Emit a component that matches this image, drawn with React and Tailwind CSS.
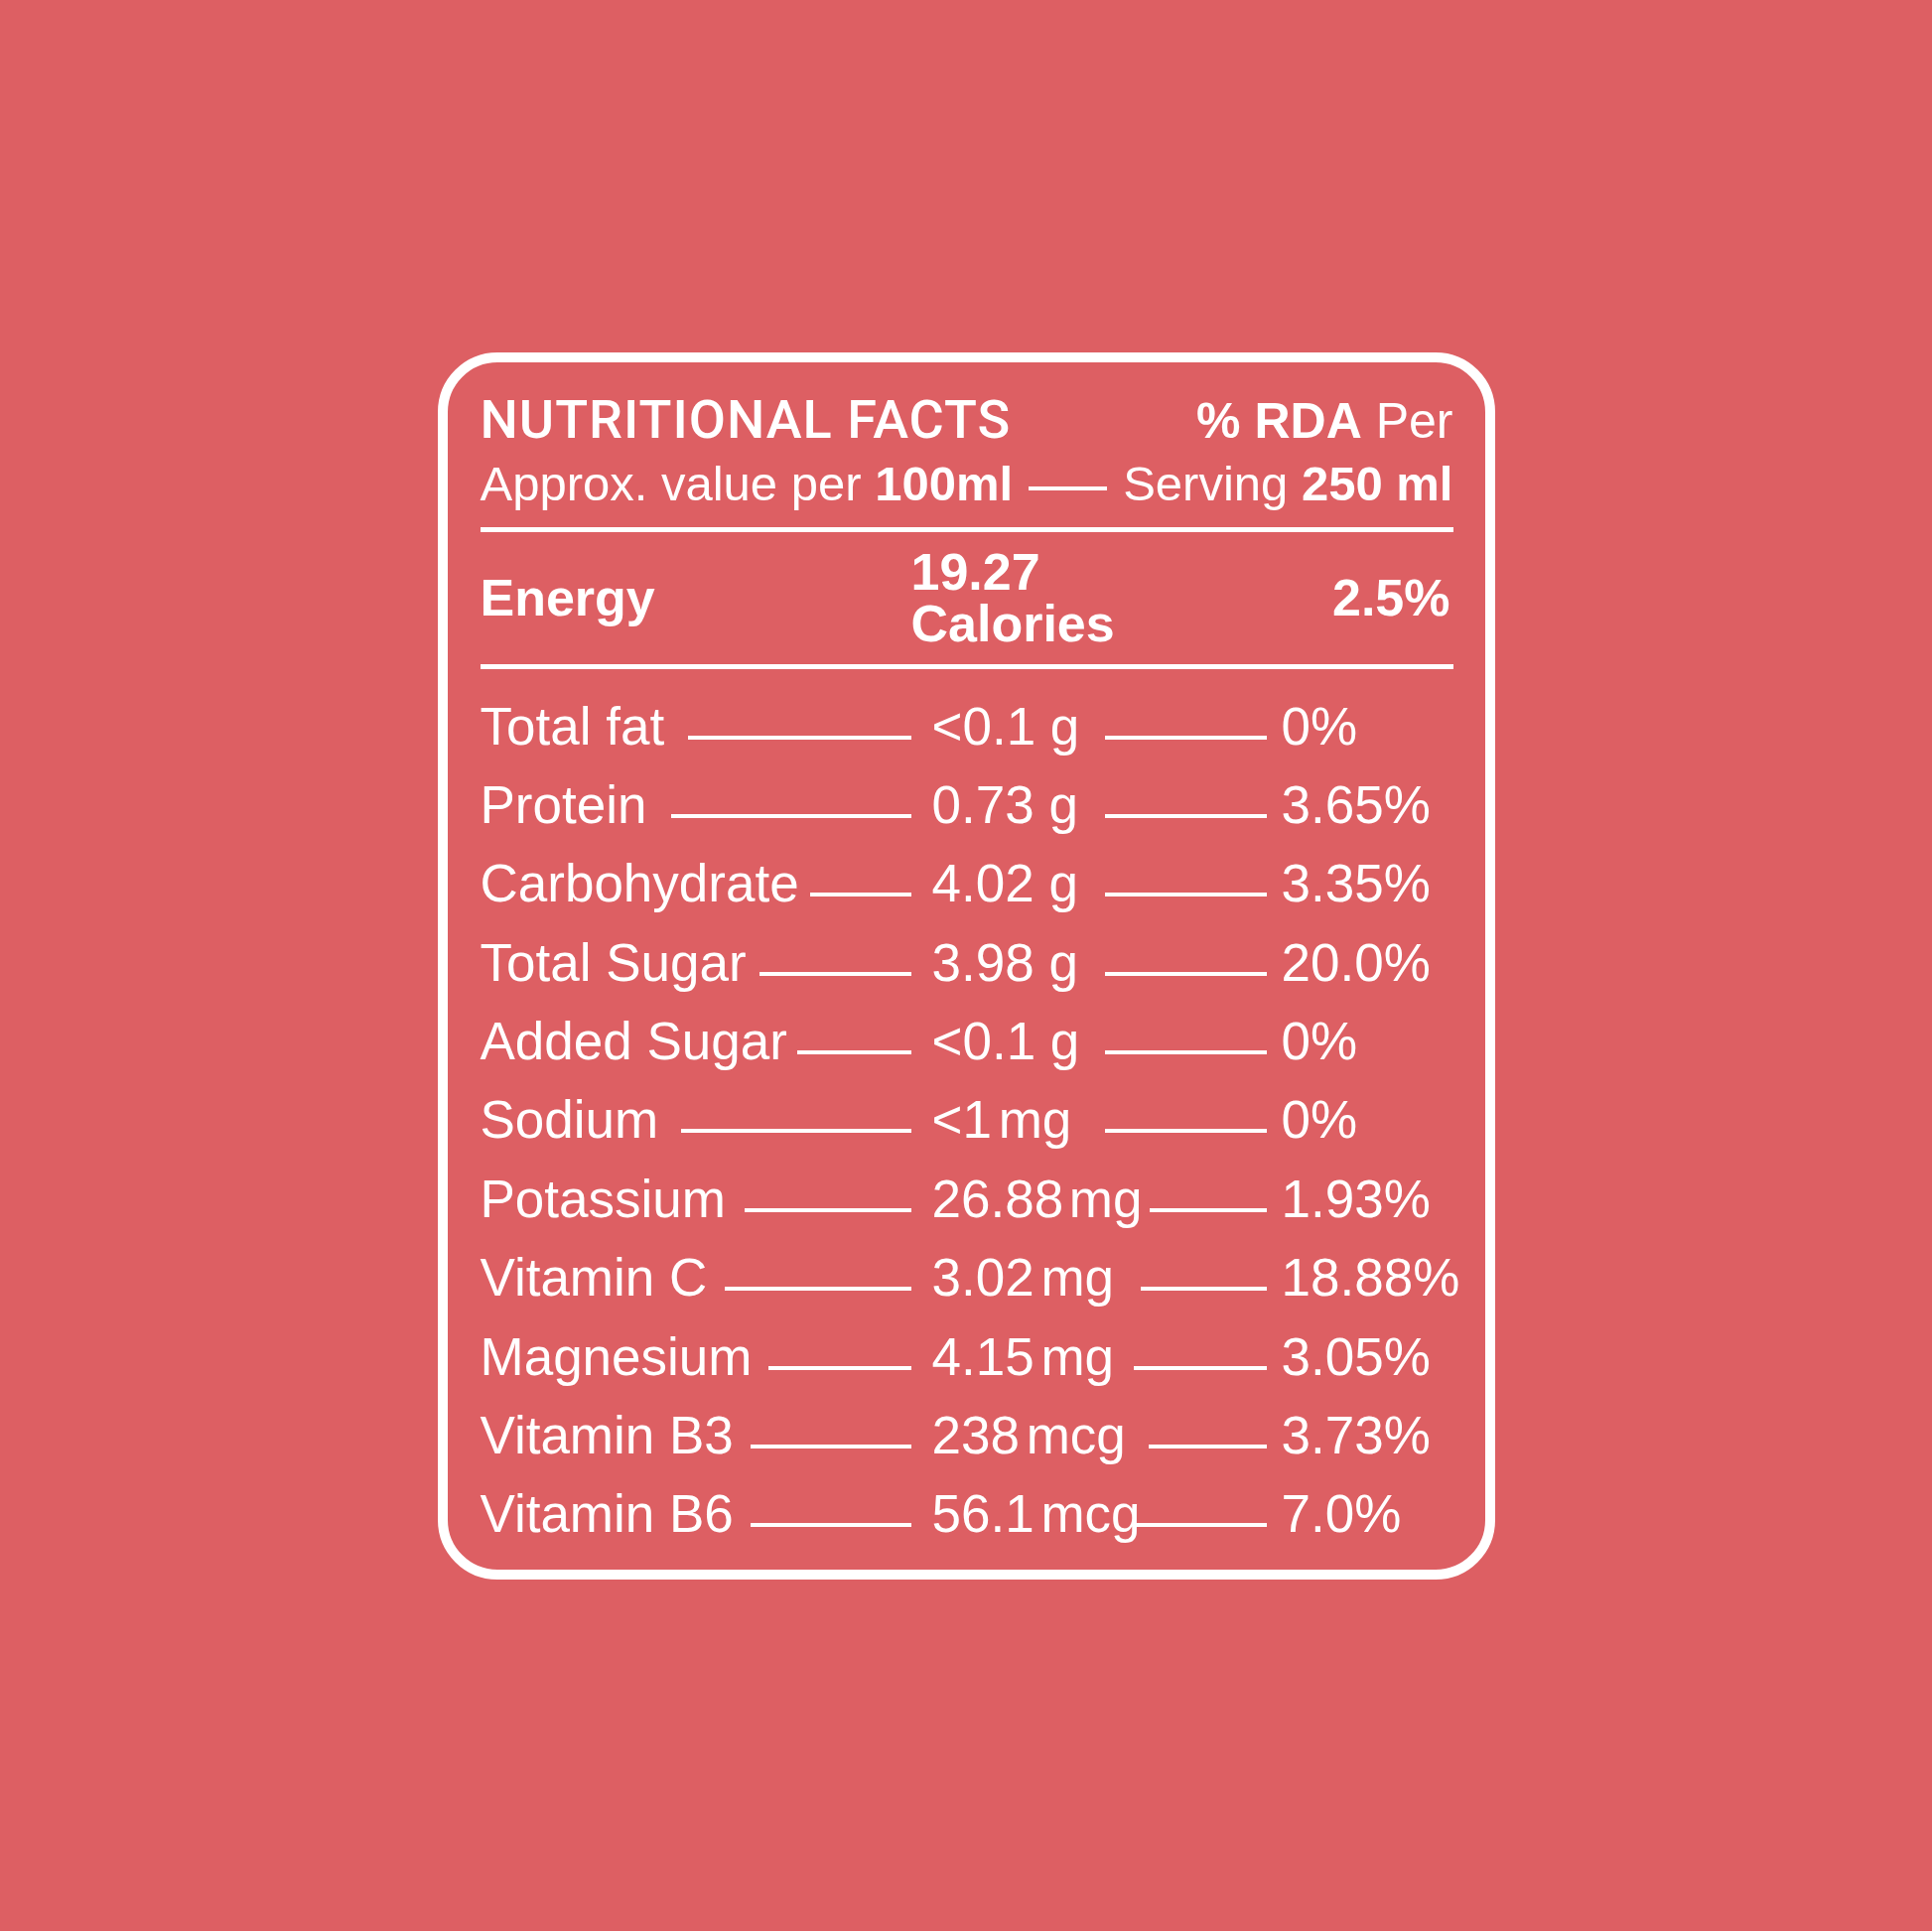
import React from "react";

const rows = [
  { label: "Total fat", value: "<0.1 g", pct: "0%", g1: "ml-[24px]", g2: "ml-[22px]", tight: "" },
  { label: "Protein", value: "0.73 g", pct: "3.65%", g1: "ml-[25px]", g2: "ml-[22px]", tight: "" },
  { label: "Carbohydrate", value: "4.02 g", pct: "3.35%", g1: "ml-[11px]", g2: "ml-[22px]", tight: "" },
  { label: "Total Sugar", value: "3.98 g", pct: "20.0%", g1: "ml-[13px]", g2: "ml-[22px]", tight: "" },
  { label: "Added Sugar", value: "<0.1 g", pct: "0%", g1: "ml-[10px]", g2: "ml-[22px]", tight: "" },
  { label: "Sodium", value: "<1 mg", pct: "0%", g1: "ml-[23px]", g2: "ml-[22px]", tight: "[word-spacing:-8px]" },
  { label: "Potassium", value: "26.88 mg", pct: "1.93%", g1: "ml-[19px]", g2: "ml-[8px]", tight: "[word-spacing:-9px]" },
  { label: "Vitamin C", value: "3.02 mg", pct: "18.88%", g1: "ml-[18px]", g2: "ml-[27px]", tight: "[word-spacing:-8px]" },
  { label: "Magnesium", value: "4.15 mg", pct: "3.05%", g1: "ml-[17px]", g2: "ml-[20px]", tight: "[word-spacing:-8px]" },
  { label: "Vitamin B3", value: "238 mcg", pct: "3.73%", g1: "ml-[17px]", g2: "ml-[23px]", tight: "[word-spacing:-8px]" },
  { label: "Vitamin B6", value: "56.1 mcg", pct: "7.0%", g1: "ml-[17px]", g2: "-ml-[7px]", tight: "[word-spacing:-8px]" },
];

const App = () => {
  return (
    <div className="flex h-[1945px] w-full items-center justify-center bg-[#dd5f63] font-['Liberation_Sans',Arial,sans-serif] text-white">
      {/* Label card */}
      <div className="h-[1236px] w-[1065px] rounded-[60px] border-[10px] border-white pt-[27px] pr-[32px] pl-[33px]">
        {/* Header */}
        <div className="flex h-[62px] items-baseline justify-between leading-[62px]">
          <h1 className="font-['Roboto',sans-serif] text-[54px] font-medium tracking-[1px]">NUTRITIONAL FACTS</h1>
          <div className="text-[50px]">
            <span className="font-bold">% RDA</span> Per
          </div>
        </div>
        <div className="flex h-[66px] items-baseline text-[49px] leading-[66px] whitespace-nowrap">
          <span>
            Approx. value per <span className="font-bold">100ml</span>
          </span>
          {/* dash: border sits above the baseline */}
          <div className="mx-[16px] h-[14px] w-[81px] border-t-[4px] border-white" />
          <span>
            Serving <span className="font-bold">250 ml</span>
          </span>
        </div>

        <div className="mt-[11px] h-[5px] bg-white" />

        {/* Energy */}
        <div className="flex h-[133px] items-center text-[52px] font-bold">
          <div className="w-[434px] shrink-0 leading-[52px]">Energy</div>
          <div className="leading-[52px]">
            19.27
            <br />
            Calories
          </div>
          <div className="ml-auto pr-[3px] leading-[52px]">2.5%</div>
        </div>

        <div className="h-[5px] bg-white" />

        {/* Nutrient rows */}
        <div className="mt-[18px] text-[53px]">
          {rows.map((row, index) => (
            <div key={index} className="flex h-[79.4px] items-baseline leading-[79.4px] whitespace-nowrap">
              <div className="flex w-[434px] shrink-0 items-baseline">
                <span>{row.label}</span>
                <div className={`h-[9px] flex-1 border-t-[4px] border-white ${row.g1}`} />
              </div>
              <div className="ml-[21px] flex w-[337px] shrink-0 items-baseline">
                <span className={`min-w-[152px] ${row.tight}`}>{row.value}</span>
                <div className={`h-[9px] flex-1 border-t-[4px] border-white ${row.g2}`} />
              </div>
              <span className="ml-[15px]">{row.pct}</span>
            </div>
          ))}
        </div>
      </div>
    </div>
  );
};

export default App;
